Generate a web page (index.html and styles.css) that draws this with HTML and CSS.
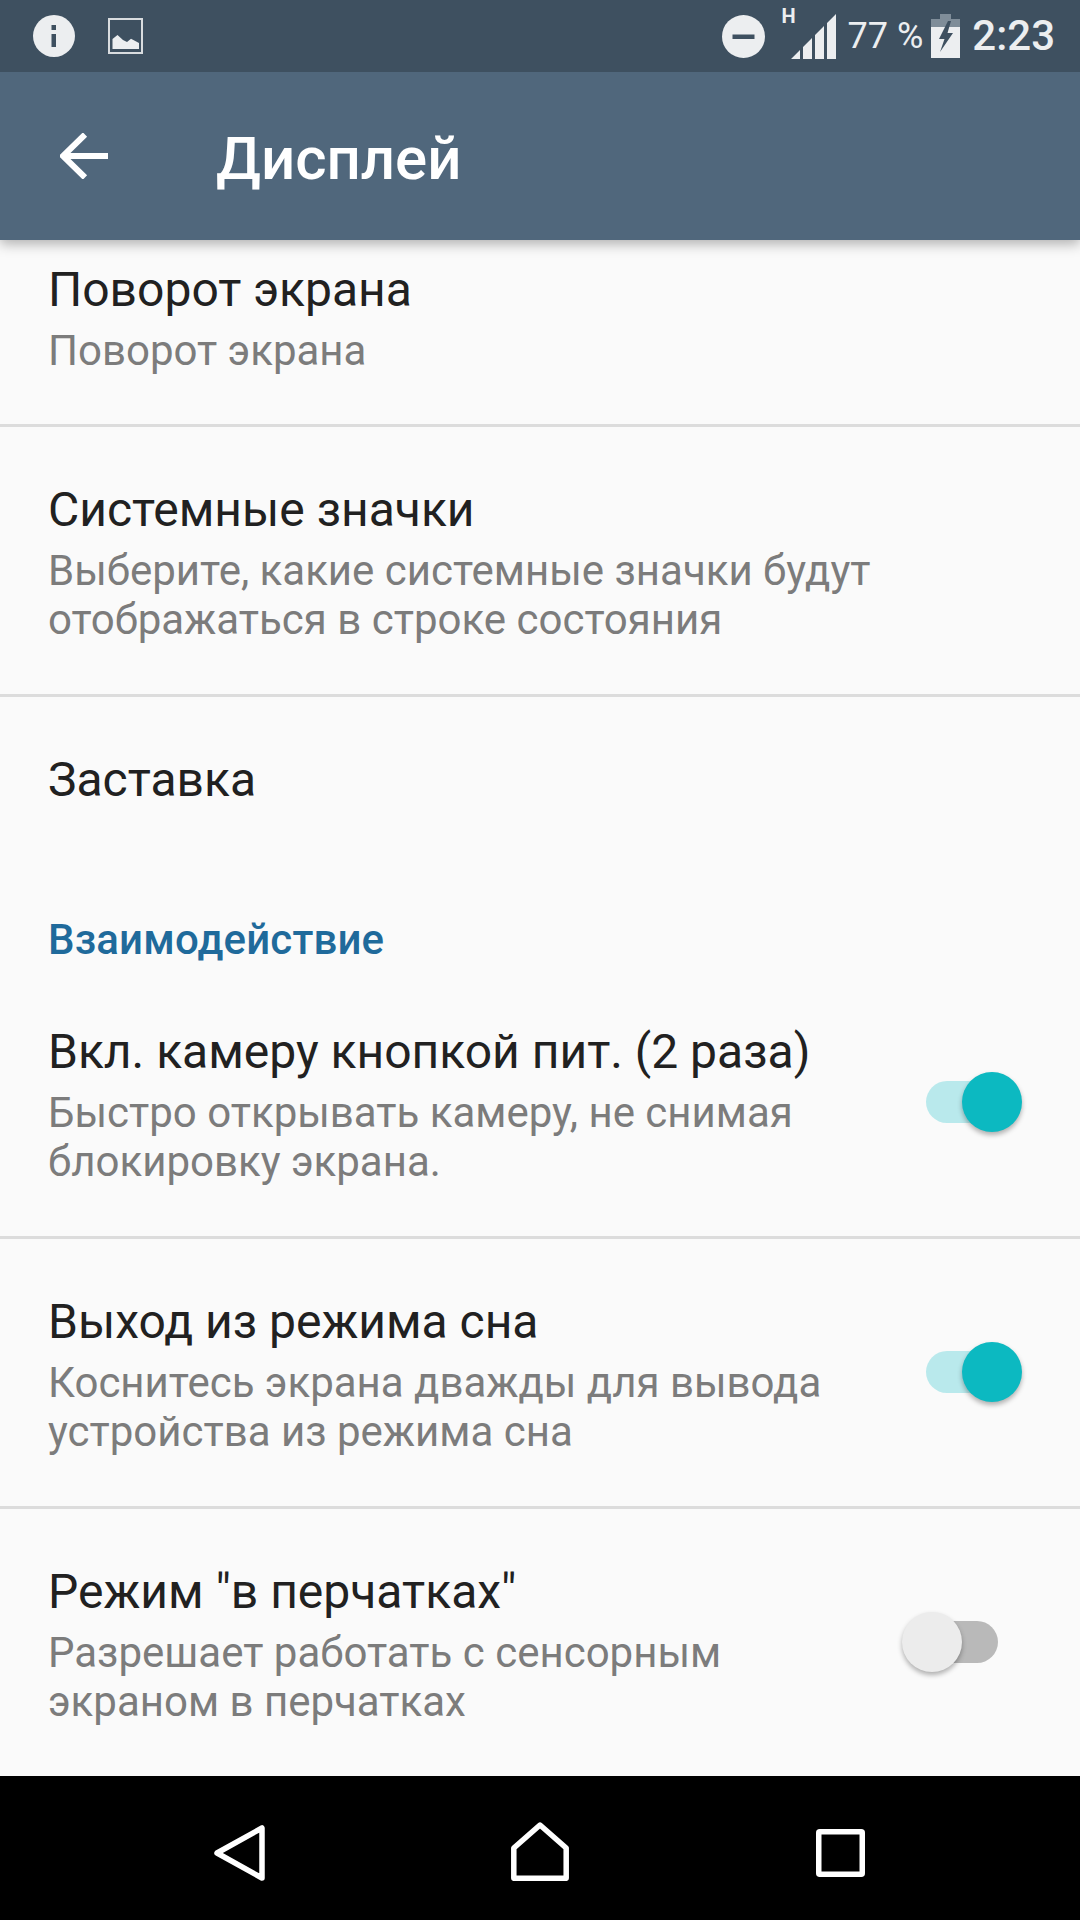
FILE: index.html
```html
<!DOCTYPE html>
<html lang="ru">
<head>
<meta charset="utf-8">
<title>Дисплей</title>
<link rel="stylesheet" href="styles.css">
</head>
<body>
<div class="screen">
  <header class="status">
    <div class="status-left">
      <svg class="ic-info" viewBox="0 0 42 42"><circle cx="21" cy="21" r="21" fill="#eceef0"/><rect x="18.500" y="10" width="4.500" height="5" fill="#3e5060"/><rect x="18.500" y="19" width="4.500" height="13" fill="#3e5060"/></svg>
      <svg class="ic-pic" viewBox="0 0 35 36"><rect x="1" y="1" width="33" height="34" fill="none" stroke="#d9dcdf" stroke-width="2"/><path d="M4.500 31V21L9.500 17L15 22L19 24L23 20.700L31 25V31Z" fill="#eceef0"/></svg>
    </div>
    <div class="status-right">
      <svg class="ic-dnd" viewBox="0 0 43 43"><circle cx="21.500" cy="21.500" r="21.500" fill="#eceef0"/><rect x="10.500" y="19.500" width="22" height="4.500" fill="#3e5060"/></svg>
      <div class="signal">
        <span class="net">H</span>
        <svg class="ic-signal" viewBox="0 0 45 45"><path d="M0 45L9 36V45ZM12 45V33L21 24V45ZM24 45V21L33 12V45ZM36 45V9L45 0V45Z" fill="#eceef0"/></svg>
      </div>
      <span class="pct">77 %</span>
      <svg class="ic-batt" viewBox="0 0 29 44"><path d="M9 0H20V5H29V14H0V5H9Z" fill="#7f8d99"/><rect y="13" width="29" height="31" fill="#eceef0"/><path d="M17 7L8 25H13.500L9 38L22 19H16.500L20 7Z" fill="#3e5060"/></svg>
      <span class="time">2:23</span>
    </div>
  </header>
  <div class="appbar">
    <svg class="ic-back" viewBox="0 0 48 46"><path d="M48 23H4M25 1.500L3 23L25 44.500" fill="none" stroke="#fff" stroke-width="6"/></svg>
    <h1 class="title">Дисплей</h1>
  </div>
  <main class="list">
    <div class="rows">
      <div class="row row-clip">
        <div class="row-text">
          <div class="row-title">Поворот экрана</div>
          <div class="row-sub">Поворот экрана</div>
        </div>
      </div>
      <div class="row">
        <div class="row-text">
          <div class="row-title">Системные значки</div>
          <div class="row-sub">Выберите, какие системные значки будут<br>отображаться в строке состояния</div>
        </div>
      </div>
      <div class="row row-plain">
        <div class="row-text">
          <div class="row-title">Заставка</div>
        </div>
      </div>
      <div class="section">Взаимодействие</div>
      <div class="row">
        <div class="row-text">
          <div class="row-title">Вкл. камеру кнопкой пит. (2 раза)</div>
          <div class="row-sub">Быстро открывать камеру, не снимая<br>блокировку экрана.</div>
        </div>
        <div class="switch on"><span class="thumb"></span></div>
      </div>
      <div class="row">
        <div class="row-text">
          <div class="row-title">Выход из режима сна</div>
          <div class="row-sub">Коснитесь экрана дважды для вывода<br>устройства из режима сна</div>
        </div>
        <div class="switch on"><span class="thumb"></span></div>
      </div>
      <div class="row row-last">
        <div class="row-text">
          <div class="row-title">Режим "в перчатках"</div>
          <div class="row-sub">Разрешает работать с сенсорным<br>экраном в перчатках</div>
        </div>
        <div class="switch"><span class="thumb"></span></div>
      </div>
    </div>
  </main>
  <nav class="navbar">
    <svg class="ic-nav-back" viewBox="0 0 51 56"><path d="M48 3V53L3 28Z" fill="none" stroke="#fff" stroke-width="5.500" stroke-linejoin="round"/></svg>
    <svg class="ic-nav-home" viewBox="0 0 58 59"><path d="M29 3L55.200 26V56.300H2.800V26Z" fill="none" stroke="#fff" stroke-width="5.500" stroke-linejoin="round"/></svg>
    <svg class="ic-nav-recent" viewBox="0 0 49 48"><rect x="2.750" y="2.750" width="43.500" height="42.500" rx="1" fill="none" stroke="#fff" stroke-width="5.500" stroke-linejoin="round"/></svg>
  </nav>
</div>
</body>
</html>
```
FILE: styles.css
```css
* { box-sizing: border-box; }
html, body { margin: 0; padding: 0; }
body { font-family: Roboto, "Liberation Sans", sans-serif; background: #fafafa; }
.screen { width: 1080px; height: 1920px; display: flex; flex-direction: column; overflow: hidden; }

.status { height: 72px; flex: none; background: #3e5060; color: #eceef0; display: flex; justify-content: space-between; align-items: center; padding: 0 25px 0 33px; position: relative; z-index: 2; }
.status-left, .status-right { display: flex; align-items: center; }
.ic-info { width: 42px; height: 42px; }
.ic-pic { width: 35px; height: 36px; margin-left: 33px; }
.ic-dnd { width: 43px; height: 43px; }
.signal { position: relative; width: 45px; height: 45px; margin-left: 26px; }
.net { position: absolute; left: -9px; top: -8px; font-size: 20px; line-height: 20px; font-weight: 700; }
.ic-signal { width: 45px; height: 45px; display: block; }
.pct { font-size: 36px; line-height: 44px; margin-left: 12px; }
.ic-batt { width: 29px; height: 44px; margin-left: 8px; }
.time { font-size: 42px; line-height: 50px; font-weight: 500; margin-left: 12px; }

.appbar { height: 168px; flex: none; background: #50677c; display: flex; align-items: center; padding-left: 60px; box-shadow: 0 4px 12px rgba(0,0,0,.3); position: relative; z-index: 1; }
.ic-back { width: 48px; height: 46px; flex: none; }
.title { margin: 0 0 0 108px; padding-top: 5px; color: #fff; font-size: 60px; line-height: 72px; font-weight: 500; }

.list { flex: 1; overflow: hidden; background: #fafafa; }
.rows { margin-top: -32px; }
.row { height: 270px; display: flex; align-items: center; justify-content: space-between; padding: 51px 82px 52px 48px; border-bottom: 3px solid #dcdcdc; }
.row-clip { height: 219px; padding-top: 50px; padding-bottom: 0; align-items: flex-start; }
.row-plain { height: 165px; border-bottom: 0; padding-bottom: 0; align-items: flex-start; }
.row-last { height: 267px; border-bottom: 0; }
.row-text { align-self: flex-start; }
.row-title { font-size: 48px; line-height: 64px; color: #212121; }
.row-sub { font-size: 42px; line-height: 49px; margin-top: 4px; color: #7c7c7c; }
.section { color: #1f6a9b; font-size: 42px; line-height: 50px; font-weight: 500; letter-spacing: .15px; padding: 53px 0 0 48px; height: 107px; }

.switch { position: relative; width: 72px; height: 42px; border-radius: 21px; background: #b9b9b9; flex: none; }
.thumb { position: absolute; top: -9px; left: -24px; width: 60px; height: 60px; border-radius: 50%; background: #ececec; box-shadow: 0 3px 5px rgba(0,0,0,.3); }
.switch.on { background: #b9e9ec; }
.switch.on .thumb { left: auto; right: -24px; background: #0cb9c1; }

.navbar { height: 144px; flex: none; background: #000; position: relative; z-index: 1; }
.ic-nav-back { position: absolute; left: 214px; top: 49px; width: 51px; height: 56px; }
.ic-nav-home { position: absolute; left: 511px; top: 46px; width: 58px; height: 59px; }
.ic-nav-recent { position: absolute; left: 816px; top: 53px; width: 49px; height: 48px; }
```
